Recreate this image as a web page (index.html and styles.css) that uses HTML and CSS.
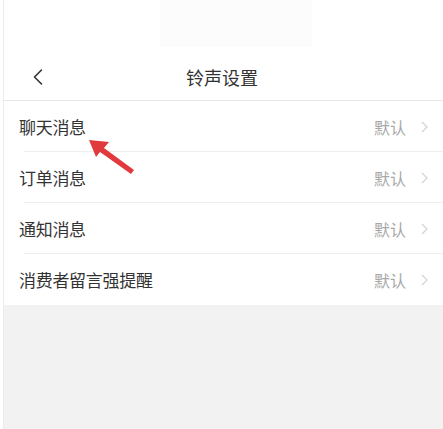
FILE: index.html
```html
<!DOCTYPE html>
<html lang="zh">
<head>
<meta charset="utf-8">
<link rel="stylesheet" href="styles.css">
</head>
<body>
<div class="page">
  <div class="top"><div class="ghost"></div></div>
  <div class="nav">
    <svg class="back" width="12" height="18" viewBox="0 0 12 18"><path d="M9.5 2 L2.5 9 L9.5 16" fill="none" stroke="#333" stroke-width="1.6" stroke-linecap="round" stroke-linejoin="round"/></svg>
    <div class="title">铃声设置</div>
  </div>
  <div class="list">
    <div class="row"><span class="label">聊天消息</span><span class="val">默认</span><svg class="chev" width="9" height="14" viewBox="0 0 9 14"><path d="M2 2 L7 7 L2 12" fill="none" stroke="#d6d6d6" stroke-width="1.4"/></svg></div>
    <div class="row"><span class="label">订单消息</span><span class="val">默认</span><svg class="chev" width="9" height="14" viewBox="0 0 9 14"><path d="M2 2 L7 7 L2 12" fill="none" stroke="#d6d6d6" stroke-width="1.4"/></svg></div>
    <div class="row"><span class="label">通知消息</span><span class="val">默认</span><svg class="chev" width="9" height="14" viewBox="0 0 9 14"><path d="M2 2 L7 7 L2 12" fill="none" stroke="#d6d6d6" stroke-width="1.4"/></svg></div>
    <div class="row last"><span class="label">消费者留言强提醒</span><span class="val">默认</span><svg class="chev" width="9" height="14" viewBox="0 0 9 14"><path d="M2 2 L7 7 L2 12" fill="none" stroke="#d6d6d6" stroke-width="1.4"/></svg></div>
  </div>
  <div class="rest"></div>
</div>
<svg class="arrow" width="443" height="429" viewBox="0 0 443 429"><polygon points="89,140 109,142 104,148 134,170 131,174 100,152 96,157" fill="#e03a3e"/></svg>
</body>
</html>
```
FILE: styles.css
```css
html, body {
  margin: 0;
  padding: 0;
  background: #fff;
  width: 443px;
  height: 429px;
  overflow: hidden;
  font-family: "Noto Sans CJK SC", "Noto Sans", sans-serif;
}
.page {
  margin-left: 3px;
  border-left: 1px solid #ececec;
  height: 429px;
  display: flex;
  flex-direction: column;
}
.top {
  height: 54px;
}
.ghost {
  margin-left: 156px;
  width: 152px;
  height: 47px;
  background: #fcfcfc;
}
.nav {
  height: 46px;
  border-bottom: 1px solid #e6e6e6;
  display: flex;
  align-items: center;
  justify-content: center;
  position: relative;
}
.back {
  position: absolute;
  left: 28px;
  top: 14px;
}
.title {
  font-size: 18px;
  color: #333;
  margin-left: -3px;
  margin-top: -1px;
}
.list {
  background: #fff;
}
.row {
  height: 51px;
  display: flex;
  align-items: center;
  padding-left: 15px;
  padding-right: 14px;
  position: relative;
}
.row::after {
  content: "";
  position: absolute;
  left: 20px;
  right: 0;
  bottom: 0;
  height: 1px;
  background: #eeeeee;
}
.row.last::after {
  display: none;
}
.label {
  flex: 1;
  font-size: 17px;
  color: #333;
  letter-spacing: -0.3px;
}
.val {
  font-size: 16px;
  color: #a8a8a8;
  margin-right: 14px;
}
.chev {
  display: block;
}
.rest {
  flex: 1;
  background: #f2f2f2;
}
.arrow {
  position: absolute;
  left: 0;
  top: 0;
}
```
